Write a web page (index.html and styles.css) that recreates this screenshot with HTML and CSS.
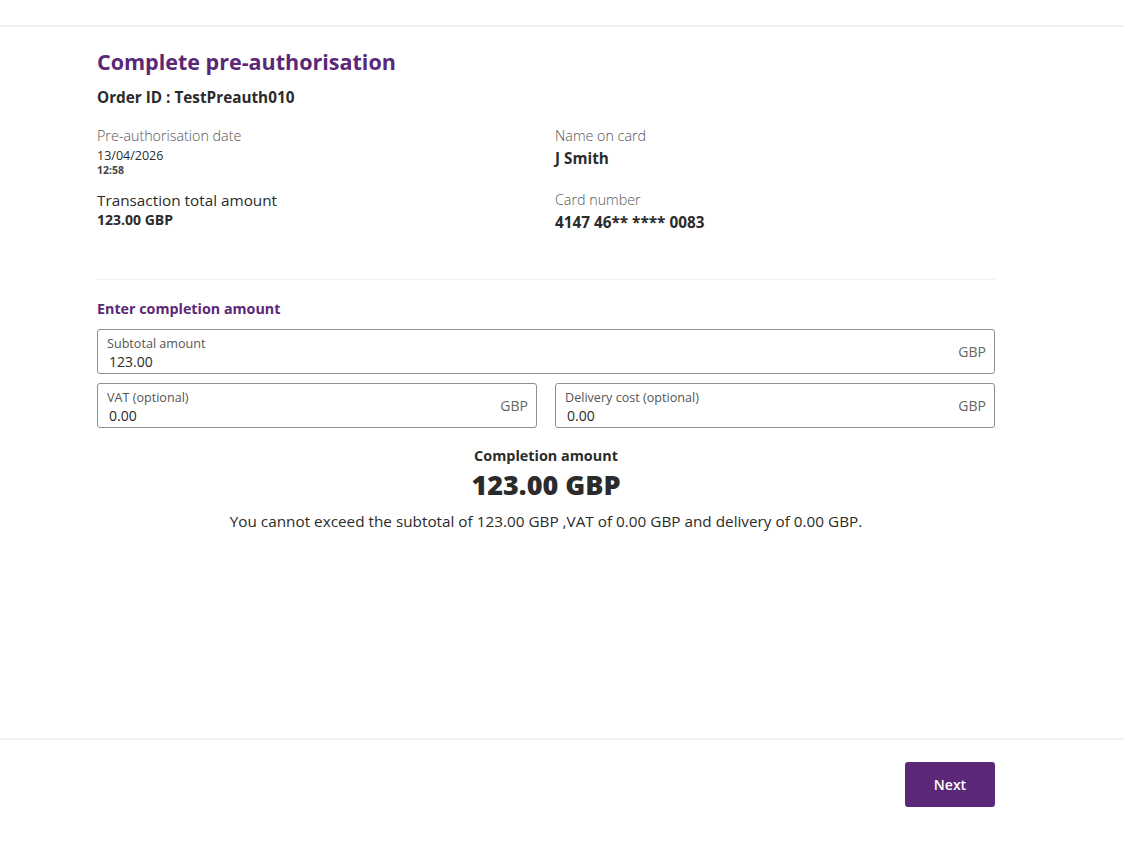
FILE: index.html
```html
<!DOCTYPE html>
<html>
<head>
<link rel="stylesheet" href="styles.css">
</head>
<body>

<div class="topbar"></div>

<div class="container">
  <h2 class="title">Complete pre-authorisation</h2>
  <div class="order-id">Order ID : TestPreauth010</div>

  <div class="details">
    <div class="col">
      <div class="item">
        <div class="label">Pre-authorisation date</div>
        <div class="date">13/04/2026</div>
        <div class="time">12:58</div>
      </div>
      <div class="item">
        <div class="label label-dark">Transaction total amount</div>
        <div class="value-sm">123.00 GBP</div>
      </div>
    </div>
    <div class="col">
      <div class="item">
        <div class="label">Name on card</div>
        <div class="value">J Smith</div>
      </div>
      <div class="item item-card">
        <div class="label">Card number</div>
        <div class="value">4147 46** **** 0083</div>
      </div>
    </div>
  </div>

  <hr class="divider">

  <form id="completion">
    <div class="section-title">Enter completion amount</div>

    <div class="field">
      <label for="subtotal">Subtotal amount</label>
      <input type="text" id="subtotal" value="123.00">
      <span class="currency">GBP</span>
    </div>

    <div class="row">
      <div class="field">
        <label for="vat">VAT (optional)</label>
        <input type="text" id="vat" value="0.00">
        <span class="currency">GBP</span>
      </div>
      <div class="field">
        <label for="delivery">Delivery cost (optional)</label>
        <input type="text" id="delivery" value="0.00">
        <span class="currency">GBP</span>
      </div>
    </div>

    <div class="summary">
      <div class="summary-label">Completion amount</div>
      <div class="summary-total">123.00 GBP</div>
      <p class="summary-note">You cannot exceed the subtotal of 123.00 GBP ,VAT of 0.00 GBP and delivery of 0.00 GBP.</p>
    </div>
  </form>
</div>

<div class="footer">
  <div class="footer-inner">
    <input type="submit" form="completion" value="Next">
  </div>
</div>

</body>
</html>
```

FILE: styles.css
```css
* {
  box-sizing: border-box;
}

body {
  margin: 0;
  font-family: "Open Sans", "Noto Sans", sans-serif;
  color: #2b2b2b;
  background: #fff;
}

.topbar {
  height: 27px;
  border-bottom: 2px solid #f1f1f1;
}

.container {
  width: 898px;
  margin-left: 97px;
  height: 691px;
}

.title {
  margin: 20px 0 0 0;
  font-size: 21.5px;
  font-weight: 700;
  color: #5b2877;
  line-height: 30px;
}

.order-id {
  margin-top: 10px;
  font-size: 15.3px;
  font-weight: 700;
  line-height: 20px;
}

.details {
  display: grid;
  grid-template-columns: 1fr 1fr;
  column-gap: 18px;
  margin-top: 19px;
}

.item {
  margin-bottom: 14px;
}

.item-card {
  margin-top: 20px;
}

.label {
  font-size: 14.3px;
  font-weight: 300;
  color: #555;
  line-height: 20px;
}

.label-dark {
  font-size: 15.3px;
  font-weight: 400;
  color: #2b2b2b;
}

.date {
  margin-top: 2px;
  font-size: 12.5px;
  line-height: 16px;
}

.time {
  font-size: 10.5px;
  font-weight: 700;
  color: #444;
  line-height: 12px;
}

.value {
  font-size: 15.3px;
  font-weight: 700;
  line-height: 24px;
}

.value-sm {
  margin-top: 1px;
  font-size: 14px;
  font-weight: 700;
  line-height: 18px;
}

.divider {
  border: none;
  border-top: 1px solid #f0f0f0;
  margin: 31px 0 0 0;
}

.section-title {
  margin-top: 19px;
  font-size: 14.3px;
  font-weight: 700;
  color: #5b2877;
  line-height: 20px;
}

.field {
  position: relative;
  height: 45px;
  border: 1px solid #8f8f8f;
  border-radius: 3px;
  margin-top: 10px;
  padding: 6px 10px 0 9px;
}

.row .field {
  margin-top: 9px;
}

.field label {
  display: block;
  font-size: 12.6px;
  color: #555;
  line-height: 16px;
}

.field input[type=text] {
  display: block;
  width: 80%;
  border: none;
  padding: 0 0 0 2px;
  font-family: inherit;
  font-size: 14px;
  color: #2b2b2b;
  line-height: 20px;
  outline: none;
  background: transparent;
}

.currency {
  position: absolute;
  right: 8px;
  top: 12px;
  font-size: 14px;
  color: #666;
}

.row {
  display: grid;
  grid-template-columns: 1fr 1fr;
  column-gap: 18px;
}

.summary {
  text-align: center;
  margin-top: 18px;
}

.summary-label {
  font-size: 14.4px;
  font-weight: 700;
  line-height: 20px;
}

.summary-total {
  font-size: 27px;
  font-weight: 800;
  line-height: 34px;
  margin-top: 2px;
}

.summary-note {
  margin: 9px 0 0 0;
  font-size: 15.3px;
  line-height: 20px;
}

.footer {
  border-top: 2px solid #f1f1f1;
}

.footer-inner {
  width: 898px;
  margin-left: 97px;
  padding-top: 22px;
  display: flex;
  justify-content: flex-end;
}

input[type=submit] {
  width: 90px;
  height: 45px;
  background-color: #5b2877;
  color: white;
  border: none;
  border-radius: 3px;
  font-family: inherit;
  font-size: 14px;
  font-weight: 600;
  cursor: pointer;
}
```
